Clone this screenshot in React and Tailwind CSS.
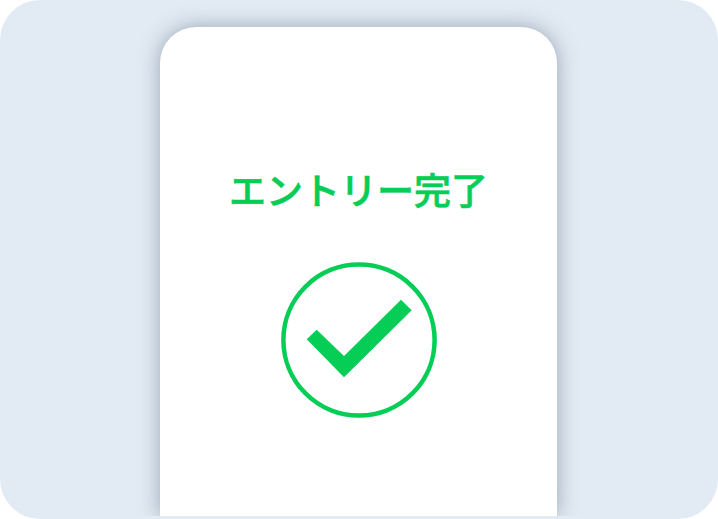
export default function App() {
  return (
    <div className="w-[718px] h-[519px] bg-white">
      <div className="h-full rounded-[40px] bg-[#e2eaf3] pt-[27px] overflow-hidden">
        <div className="w-[397px] h-[489px] ml-[160px] bg-white rounded-t-[36px] flex flex-col items-center shadow-[0_0_20px_rgba(80,100,125,0.5)] [clip-path:inset(-30px_-30px_0_-30px)]">
          <h1 className="mt-[139px] text-[37px] leading-[46px] font-medium [-webkit-text-stroke:0.6px_#05cd56] text-[#05cd56] whitespace-nowrap font-['Noto_Sans_CJK_JP',sans-serif]">
            エントリー完了
          </h1>
          <svg className="mt-[50px] w-[156px] h-[156px]" viewBox="0 0 156 156" fill="none">
            <circle cx="78" cy="78" r="75.6" stroke="#05cd56" strokeWidth="4.5" />
            <path d="M25.7 77.3 L35.7 67.7 L63 94 L120 37.7 L130.7 48.3 L63 115.3 Z" fill="#05cd56" />
          </svg>
        </div>
      </div>
    </div>
  );
}
